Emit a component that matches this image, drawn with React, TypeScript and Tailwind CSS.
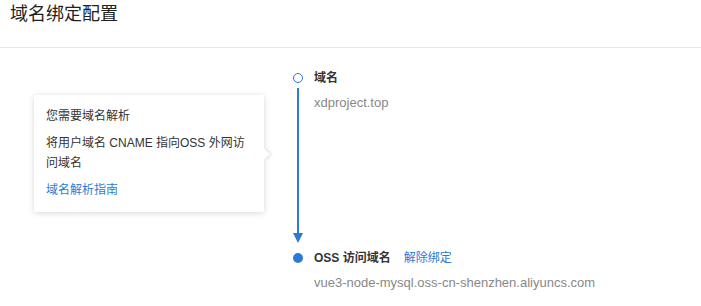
import React from "react";

const FONT = "font-['Liberation_Sans','Noto_Sans_CJK_SC',sans-serif]";

function DomainTip() {
  return (
    <div className="relative mt-[47px] ml-[34px] w-[230px] bg-white px-[12px] pt-[11px] pb-[12px] text-[12px] leading-[20px] text-[#333] shadow-[0_1px_6px_rgba(0,0,0,0.16)]">
      <p>您需要域名解析</p>
      <p className="mt-[7px]">将用户域名 CNAME 指向OSS 外网访问域名</p>
      <a className="mt-[7px] block text-[#2d7ad6]">域名解析指南</a>
      <span className="absolute top-1/2 right-[-4px] h-[8px] w-[8px] -translate-y-1/2 rotate-45 bg-white shadow-[2px_-2px_3px_rgba(0,0,0,0.08)]" />
    </div>
  );
}

function BindingSteps() {
  return (
    <div className="ml-[29px] mt-[20px] flex">
      <div className="flex w-[10px] flex-col items-center pt-[5px]">
        <span className="h-[10px] w-[10px] rounded-full border-[1.5px] border-[#2d7ad6]" />
        <span className="mt-[5px] h-[145px] w-[1.5px] bg-[#2d7ad6]" />
        <svg width="10" height="10" viewBox="0 0 10 10" className="block">
          <path d="M0 0 L10 0 L5 10 Z" fill="#2d7ad6" />
        </svg>
        <span className="mt-[10px] h-[10px] w-[10px] rounded-full bg-[#2d7ad6]" />
      </div>
      <div className="ml-[11px] text-[12px] leading-[20px]">
        <div className="font-bold text-[#333]">域名</div>
        <div className="mt-[5px] text-[13px] text-[#888]">xdproject.top</div>
        <div className="mt-[135px] flex">
          <span className="font-bold text-[#333]">OSS 访问域名</span>
          <a className="ml-[13px] text-[#2d7ad6]">解除绑定</a>
        </div>
        <div className="mt-[5px] text-[13px] text-[#888]">
          vue3-node-mysql.oss-cn-shenzhen.aliyuncs.com
        </div>
      </div>
    </div>
  );
}

export default function App() {
  return (
    <div className={`h-[306px] w-[701px] overflow-hidden bg-white ${FONT}`}>
      <div className="h-[48px] border-b border-[#e8e8e8] pl-[10px]">
        <h2 className="text-[18px] leading-[28px] text-[#222]">域名绑定配置</h2>
      </div>
      <div className="flex items-start">
        <DomainTip />
        <BindingSteps />
      </div>
    </div>
  );
}
